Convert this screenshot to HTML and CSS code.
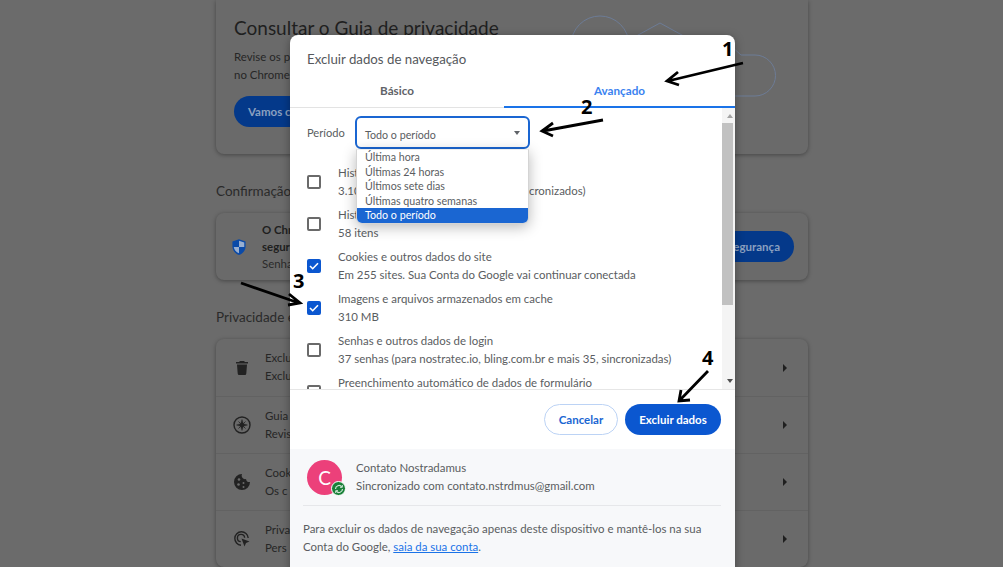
FILE: index.html
```html
<!DOCTYPE html>
<html lang="pt-BR">
<head>
<meta charset="UTF-8" />
<title>Excluir dados de navegação</title>
<link rel="stylesheet" href="styles.css">
</head>
<body>

  <!-- pagina de configuracoes, escurecida atras do dialogo -->
  <main class="page">
    <section class="card guia">
      <div class="guia-art" aria-hidden="true">
        <svg width="240" height="154" viewBox="0 0 240 154" fill="none" stroke="#6d7c96" stroke-width="1">
          <circle cx="28" cy="45" r="29"/>
          <path d="M57 40 L88 23 L119 40 L119 80 L88 98 L57 80 Z"/>
          <path d="M143 96 H183 A20 20 0 0 0 183 55 H169 A26 26 0 0 0 123 70 A14 14 0 0 0 143 96 Z"/>
        </svg>
      </div>
      <h1>Consultar o Guia de privacidade</h1>
      <p>Revise os p<br>no Chrome</p>
      <button type="button" class="btn-fundo">Vamos c</button>
    </section>

    <h2>Confirmação</h2>
    <section class="card seguranca">
      <svg class="icone" width="14" height="16" viewBox="0 0 16 18"><path d="M8 0 L15.500 2.800 V8 C15.500 12.800 12.300 16.500 8 18 C3.700 16.500 0.500 12.800 0.500 8 V2.800 Z" fill="#0a4aa8"/><path d="M8 1.800 L14 3.800 V9 H8 Z M8 9 V16.200 C4.700 15 2.400 12.300 2 9 Z" fill="#98afd0"/></svg>
      <div class="seg-texto">
        <strong>O Chr</strong>
        <strong>segur</strong>
        <span>Senha</span>
      </div>
      <button type="button" class="btn-fundo">segurança</button>
    </section>

    <h2>Privacidade e</h2>
    <section class="card lista">
      <div class="linha">
        <svg class="icone" width="12" height="14" viewBox="0 0 12 14" fill="#222"><path d="M4 0 H8 L9 1 H12 V2.500 H0 V1 H3 Z M1 3.500 H11 L10.300 12.500 A1.500 1.500 0 0 1 8.800 14 H3.200 A1.500 1.500 0 0 1 1.700 12.500 Z"/></svg>
        <div class="linha-texto"><span>Exclu</span><span>Exclu</span></div>
        <i class="seta"></i>
      </div>
      <div class="linha">
        <svg class="icone" width="18" height="18" viewBox="0 0 18 18" fill="none" stroke="#222" stroke-width="1.400"><circle cx="9" cy="9" r="8"/><path d="M9 3.500 L10.300 7.700 L14.500 9 L10.300 10.300 L9 14.500 L7.700 10.300 L3.500 9 L7.700 7.700 Z" fill="#222" stroke-width="0.400"/><path d="M5.500 5.500 L12.500 12.500 M12.500 5.500 L5.500 12.500" stroke-width="0.800"/></svg>
        <div class="linha-texto"><span>Guia</span><span>Revis</span></div>
        <i class="seta"></i>
      </div>
      <div class="linha">
        <svg class="icone" width="16" height="16" viewBox="0 0 16 16"><path d="M8 0 A8 8 0 1 0 16 8 A3.500 3.500 0 0 1 12 5 A3.500 3.500 0 0 1 8 0 Z" fill="#222"/><g fill="#6b6b6b"><circle cx="5" cy="5.500" r="1.300"/><circle cx="4.500" cy="10.500" r="1.300"/><circle cx="9.500" cy="9" r="1"/><circle cx="9.500" cy="13" r="1"/></g></svg>
        <div class="linha-texto"><span>Cook</span><span>Os c</span></div>
        <i class="seta"></i>
      </div>
      <div class="linha">
        <svg class="icone" width="16" height="16" viewBox="0 0 16 16" fill="none" stroke="#222" stroke-width="1.400"><path d="M7 14.200 A6.700 6.700 0 1 1 14.200 7"/><path d="M6.800 10.600 A3.600 3.600 0 1 1 10.600 6.800"/><path d="M7.500 7.500 L15.500 10.500 L12 12 L10.500 15.500 Z" fill="#222" stroke="none"/></svg>
        <div class="linha-texto"><span>Priva</span><span>Pers</span></div>
        <i class="seta"></i>
      </div>
    </section>
  </main>

  <div class="dialogo" role="dialog" aria-label="Excluir dados de navegação">
    <div class="dlg-titulo">Excluir dados de navegação</div>

    <div class="abas">
      <div class="aba">Básico</div>
      <div class="aba ativa">Avançado</div>
    </div>

    <div class="rolagem">
      <div class="conteudo">
        <div class="periodo">
          <label>Período</label>
          <div class="select">Todo o período<i class="caret"></i></div>
          <ul class="opcoes">
            <li>Última hora</li>
            <li>Últimas 24 horas</li>
            <li>Últimos sete dias</li>
            <li>Últimas quatro semanas</li>
            <li class="sel">Todo o período</li>
          </ul>
        </div>

        <div class="item">
          <span class="check"></span>
          <div class="item-texto"><div>Histórico de navegação</div><div>3.106 itens (e mais em dispositivos sincronizados)</div></div>
        </div>
        <div class="item">
          <span class="check"></span>
          <div class="item-texto"><div>Histórico de downloads</div><div>58 itens</div></div>
        </div>
        <div class="item">
          <span class="check on"><svg width="10" height="8" viewBox="0 0 10 8" fill="none" stroke="#fff" stroke-width="1.600"><path d="M1 4 L3.700 6.700 L9 1.200"/></svg></span>
          <div class="item-texto"><div>Cookies e outros dados do site</div><div>Em 255 sites. Sua Conta do Google vai continuar conectada</div></div>
        </div>
        <div class="item">
          <span class="check on"><svg width="10" height="8" viewBox="0 0 10 8" fill="none" stroke="#fff" stroke-width="1.600"><path d="M1 4 L3.700 6.700 L9 1.200"/></svg></span>
          <div class="item-texto"><div>Imagens e arquivos armazenados em cache</div><div>310 MB</div></div>
        </div>
        <div class="item">
          <span class="check"></span>
          <div class="item-texto"><div>Senhas e outros dados de login</div><div>37 senhas (para nostratec.io, bling.com.br e mais 35, sincronizadas)</div></div>
        </div>
        <div class="item">
          <span class="check"></span>
          <div class="item-texto"><div>Preenchimento automático de dados de formulário</div></div>
        </div>
      </div>
      <div class="barra">
        <i class="sobe"></i>
        <div class="trilho"><div class="polegar"></div></div>
        <i class="desce"></i>
      </div>
    </div>

    <div class="acoes">
      <button type="button" class="btn cancelar">Cancelar</button>
      <button type="button" class="btn excluir">Excluir dados</button>
    </div>

    <div class="conta">
      <div class="perfil">
        <div class="avatar">C
          <span class="selo"><svg width="10" height="10" viewBox="0 0 10 10" fill="none" stroke="#cfe6d6" stroke-width="1.200"><path d="M1.500 5 A3.500 3.500 0 0 1 7.700 2.800"/><path d="M8.500 5 A3.500 3.500 0 0 1 2.300 7.200"/><path d="M8.300 1 V3.300 H6" stroke-width="1"/><path d="M1.700 9 V6.700 H4" stroke-width="1"/></svg></span>
        </div>
        <div class="perfil-texto">
          <div>Contato Nostradamus</div>
          <div>Sincronizado com contato.nstrdmus@gmail.com</div>
        </div>
      </div>
      <p class="aviso">Para excluir os dados de navegação apenas deste dispositivo e mantê-los na sua<br>Conta do Google, <a href="#">saia da sua conta</a>.</p>
    </div>
  </div>

  <!-- setas e numeros desenhados por cima da captura -->
  <svg class="anotacoes" width="1003" height="567" viewBox="0 0 1003 567" fill="none" stroke="#000" stroke-width="2.800" aria-hidden="true">
    <path d="M743 63 L668 81 M678 72 L667 81 L679 85"/>
    <path d="M603 120 L543 131 M553 123 L542 131 L553 136"/>
    <path d="M241 283 L299 303 M289 294 L300 303 L288 305"/>
    <path d="M708 371 L680 400 M681 390 L679 401 L690 400"/>
    <g fill="#000" stroke="none" class="nums">
      <text x="722" y="56">1</text>
      <text x="581" y="114">2</text>
      <text x="293" y="288">3</text>
      <text x="702" y="365">4</text>
    </g>
  </svg>

</body>
</html>
```

FILE: styles.css
```css
* {
  box-sizing: border-box;
}
html, body {
  margin: 0;
  padding: 0;
  height: 567px;
  overflow: hidden;
}
body {
  position: relative;
  background: #6b6b6b;
  color: #202124;
  font-family: Lato, Roboto, sans-serif;
  font-size: 11.450px;
}

/* PAGINA DE FUNDO */
.page {
  width: 592px;
  margin-left: 216px;
}
.page h2 {
  margin: 0;
  padding: 28px 0 13px;
  font-size: 13.500px;
  font-weight: 400;
  line-height: 18px;
  color: #2a2a2a;
}
.card {
  background: #6a6a6a;
  border-radius: 8px;
  box-shadow: 0 1px 4px rgba(0,0,0,0.35);
}
.guia {
  position: relative;
  height: 154px;
  padding: 16px 18px 0;
  border-radius: 0 0 8px 8px;
}
.guia h1 {
  margin: 0 0 8px;
  font-size: 19px;
  font-weight: 400;
  line-height: 24px;
  color: #1f1f1f;
}
.guia p {
  margin: 0 0 12px;
  line-height: 18px;
  color: #262626;
}
.guia-art {
  position: absolute;
  top: 0;
  left: 356px;
}
.btn-fundo {
  height: 31px;
  padding: 0 14px;
  border: none;
  border-radius: 16px;
  background: #04398a;
  color: #8aa0c0;
  font: 700 11.500px Lato, sans-serif;
  white-space: nowrap;
}
.seguranca {
  display: flex;
  align-items: center;
  height: 67px;
  padding: 0 14px 0 16px;
  gap: 16px;
}
.seguranca .btn-fundo {
  width: 90px;
  text-align: right;
}
.seg-texto {
  flex: 1;
  display: flex;
  flex-direction: column;
  line-height: 17px;
}
.seg-texto strong {
  font-weight: 700;
  color: #1f1f1f;
}
.seg-texto span {
  color: #2a2a2a;
}
.linha {
  display: flex;
  align-items: center;
  height: 57px;
  padding: 0 21px 0 17px;
  gap: 14px;
  border-top: 1px solid #626262;
}
.linha:first-child {
  border-top: none;
}
.icone {
  flex: none;
}
.linha .icone {
  width: 18px;
}
.linha-texto {
  flex: 1;
  display: flex;
  flex-direction: column;
  margin-top: -1px;
  line-height: 18px;
  color: #262626;
}
.seta {
  width: 0;
  height: 0;
  border-left: 4px solid #1f1f1f;
  border-top: 4.500px solid transparent;
  border-bottom: 4.500px solid transparent;
}

/* DIALOGO */
.dialogo {
  position: absolute;
  left: 290px;
  top: 35px;
  width: 445px;
  height: 540px;
  background: #fff;
  border-radius: 8px;
  box-shadow: 0 2px 10px rgba(0,0,0,0.35);
  color: #5a5d61;
  overflow: hidden;
}
.dlg-titulo {
  padding: 15px 17px 0;
  height: 43px;
  font-size: 13.250px;
  line-height: 18px;
  color: #55585c;
}
.abas {
  display: flex;
  height: 30px;
  border-bottom: 1px solid #e3e3e3;
}
.aba {
  flex: 1;
  padding-top: 3px;
  text-align: center;
  font-size: 11.700px;
  font-weight: 700;
  line-height: 18px;
  color: #5f6368;
}
.aba:first-child {
  flex: 0 0 214px;
}
.aba.ativa {
  color: #3b82f0;
  border-bottom: 2px solid #1a73e8;
  height: 30px;
}
.rolagem {
  display: flex;
  height: 282px;
  border-bottom: 1px solid #e6e6e6;
  overflow: hidden;
}
.conteudo {
  flex: 1;
  padding: 8px 0 0 17px;
  min-width: 0;
}
.periodo {
  position: relative;
  display: flex;
  align-items: center;
  height: 33px;
  margin-bottom: 12px;
  gap: 10px;
}
.periodo label {
  width: 38px;
  font-size: 11.100px;
}
.select {
  position: relative;
  width: 175px;
  height: 33px;
  padding: 8px 8px 0;
  border: 2px solid #1a66d2;
  border-radius: 6px;
  font-size: 10.700px;
  line-height: 18px;
}
.caret {
  position: absolute;
  right: 8px;
  top: 13px;
  border-top: 4px solid #5f6368;
  border-left: 3.500px solid transparent;
  border-right: 3.500px solid transparent;
}
.opcoes {
  position: absolute;
  left: 49px;
  top: 33px;
  width: 173px;
  margin: 0;
  padding: 0;
  list-style: none;
  background: #fff;
  border: 1px solid #d4d4d4;
  border-top-color: #eee;
  border-radius: 0 0 6px 6px;
  box-shadow: 0 3px 14px rgba(0,0,0,0.28);
  overflow: hidden;
  z-index: 2;
}
.opcoes li {
  height: 14.600px;
  padding-left: 8px;
  font-size: 10.700px;
  line-height: 14.600px;
  color: #5a5d61;
}
.opcoes li.sel {
  background: #1a66d2;
  color: #fff;
}
.item {
  display: flex;
  align-items: center;
  height: 42px;
  gap: 17px;
  line-height: 18px;
}
.item-texto {
  min-height: 36px;
}
.check {
  flex: none;
  display: flex;
  align-items: center;
  justify-content: center;
  width: 14px;
  height: 14px;
  border: 2px solid #6a6a6a;
  border-radius: 2px;
}
.check.on {
  background: #0b57d0;
  border-color: #0b57d0;
}
.barra {
  flex: none;
  display: flex;
  flex-direction: column;
  width: 13px;
  background: #f4f4f4;
}
.sobe, .desce {
  flex: none;
  width: 0;
  height: 0;
  margin: 6px 5px;
  border-left: 3.500px solid transparent;
  border-right: 3.500px solid transparent;
}
.sobe {
  margin-bottom: 5px;
  border-bottom: 4px solid #a3a3a3;
}
.desce {
  border-top: 4px solid #505050;
}
.trilho {
  flex: 1;
}
.polegar {
  height: 182px;
  margin-right: 2px;
  background: #c1c1c1;
}
.acoes {
  display: flex;
  justify-content: flex-end;
  gap: 7px;
  height: 59px;
  padding: 14px 14px 0 0;
}
.btn {
  height: 31px;
  border-radius: 16px;
  font: 700 11.500px Lato, sans-serif;
}
.cancelar {
  width: 74px;
  background: #fff;
  border: 1px solid #bcd3f5;
  color: #1a66d2;
}
.excluir {
  width: 96px;
  background: #0b57d0;
  border: none;
  color: #fff;
}
.conta {
  height: 130px;
  padding: 11px 14px 0 13px;
  background: #f7f8fa;
}
.perfil {
  display: flex;
  align-items: center;
  height: 46px;
  padding: 0 0 10px 4px;
  gap: 14px;
  border-bottom: 1px solid #e6e7ea;
  line-height: 18px;
}
.avatar {
  position: relative;
  display: flex;
  align-items: center;
  justify-content: center;
  flex: none;
  width: 35px;
  height: 35px;
  border-radius: 50%;
  background: #ec407a;
  color: #fff;
  font-size: 19px;
}
.selo {
  position: absolute;
  right: -4px;
  bottom: -1px;
  display: flex;
  align-items: center;
  justify-content: center;
  width: 15px;
  height: 15px;
  border-radius: 50%;
  background: #188038;
  border: 1px solid #fff;
}
.perfil-texto {
  margin-top: -2px;
}
.aviso {
  margin: 14px 0 0;
  line-height: 18px;
}
.aviso a {
  color: #1a73e8;
}

/* ANOTACOES */
.anotacoes {
  position: absolute;
  left: 0;
  top: 0;
  pointer-events: none;
}
.nums text {
  font-family: "Open Sans", sans-serif;
  font-size: 20px;
  font-weight: 700;
}
```
